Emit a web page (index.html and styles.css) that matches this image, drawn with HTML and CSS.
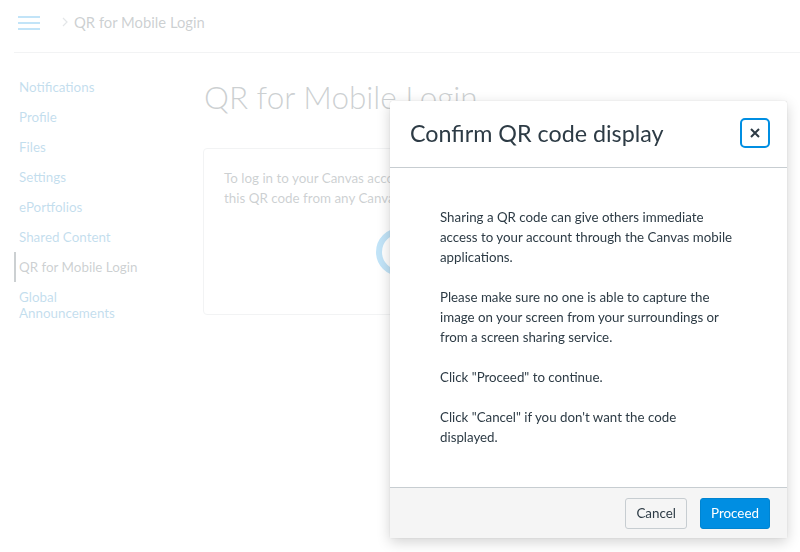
FILE: index.html
```html
<!DOCTYPE html>
<html lang="en">
<head>
<meta charset="utf-8">
<title>QR for Mobile Login</title>
<link rel="stylesheet" href="styles.css">
</head>
<body>
<div class="app">
  <header class="topbar">
    <svg class="hamburger" width="22" height="14" viewBox="0 0 22 14"><rect x="0" y="0" width="22" height="2"/><rect x="0" y="6" width="22" height="2"/><rect x="0" y="12" width="22" height="2"/></svg>
    <svg class="chev" width="6" height="10" viewBox="0 0 6 10"><path d="M1 1 L5 5 L1 9" fill="none" stroke="#8b969e" stroke-width="1.2"/></svg>
    <span class="crumb">QR for Mobile Login</span>
  </header>
  <div class="layout">
    <nav class="sidebar">
      <a class="nav-item">Notifications</a>
      <a class="nav-item">Profile</a>
      <a class="nav-item">Files</a>
      <a class="nav-item">Settings</a>
      <a class="nav-item">ePortfolios</a>
      <a class="nav-item">Shared Content</a>
      <a class="nav-item active">QR for Mobile Login</a>
      <a class="nav-item">Global Announcements</a>
    </nav>
    <main class="main">
      <h1 class="page-title">QR for Mobile Login</h1>
      <section class="qr-box">
        <p class="qr-text">To log in to your Canvas account on a mobile device, scan<br>this QR code from any Canvas mobile app.</p>
        <div class="spinner"></div>
      </section>
    </main>
  </div>
</div>
<div class="overlay"></div>
<div class="modal" role="dialog">
  <div class="modal-header">
    <h2 class="modal-title">Confirm QR code display</h2>
    <button class="close-btn" aria-label="Close"><svg width="10" height="10" viewBox="0 0 10 10"><path d="M1 1 L9 9 M9 1 L1 9" stroke="#2d3b45" stroke-width="2"/></svg></button>
  </div>
  <div class="modal-body">
    <p>Sharing a QR code can give others immediate access to your account through the Canvas mobile applications.</p>
    <p>Please make sure no one is able to capture the image on your screen from your surroundings or from a screen sharing service.</p>
    <p>Click "Proceed" to continue.</p>
    <p>Click "Cancel" if you don't want the code displayed.</p>
  </div>
  <div class="modal-footer">
    <button class="btn btn-default">Cancel</button>
    <button class="btn btn-primary">Proceed</button>
  </div>
</div>
</body>
</html>
```
FILE: styles.css
```css
* { box-sizing: border-box; }
html, body { margin: 0; padding: 0; }
body {
  font-family: Lato, "Open Sans", "Liberation Sans", sans-serif;
  color: #2d3b45;
  background: #fff;
  width: 800px;
  height: 552px;
  overflow: hidden;
  position: relative;
}
.topbar {
  display: flex;
  align-items: center;
  height: 53px;
  margin-left: 14px;
  padding: 0 0 9px 4px;
  border-bottom: 1px solid #c7cdd1;
}
.hamburger { fill: #008ee2; margin-top: 3px; }
.chev { margin-left: 22px; margin-top: 1px; }
.crumb { margin-left: 6px; font-size: 14.8px; color: #2d3b45; }
.layout {
  display: flex;
  margin-left: 14px;
  padding-top: 19px;
}
.sidebar {
  width: 130px;
  flex: none;
  display: flex;
  flex-direction: column;
}
.nav-item {
  display: block;
  font-size: 13.4px;
  line-height: 16px;
  padding: 7px 0 7px 3px;
  border-left: 2px solid transparent;
  color: #0374b5;
}
.nav-item.active {
  border-left-color: #2d3b45;
  color: #2d3b45;
}
.main {
  flex: 1;
  margin-left: 59px;
  padding-right: 20px;
}
.page-title {
  margin: 6px 0 0 1px;
  font-size: 31.5px;
  font-weight: 300;
  line-height: 39px;
}
.qr-box {
  margin-top: 31px;
  height: 167px;
  border: 1px solid #c7cdd1;
  border-radius: 4px;
  padding: 19px 20px;
}
.qr-text { margin: 0; font-size: 13.4px; line-height: 20px; }
.spinner {
  width: 48px;
  height: 48px;
  margin: 20px 0 0 152px;
  border-radius: 50%;
  border: 6px solid #008ee2;
}
.overlay {
  position: fixed;
  inset: 0;
  background: rgba(255,255,255,0.76);
}
.modal {
  position: absolute;
  left: 390px;
  top: 101px;
  width: 397px;
  background: #fff;
  border-radius: 2px;
  box-shadow: 0 0 1px rgba(0,0,0,.25), 0 4px 14px rgba(0,0,0,.18);
}
.modal-header {
  height: 67px;
  display: flex;
  align-items: center;
  justify-content: space-between;
  padding: 0 17px 2px 20px;
  border-bottom: 1px solid #c7cdd1;
}
.modal-title {
  margin: 0;
  font-size: 23.3px;
  font-weight: 400;
  color: #2d3b45;
}
.close-btn {
  width: 30px;
  height: 30px;
  padding: 0;
  display: flex;
  align-items: center;
  justify-content: center;
  background: #fff;
  border: 2px solid #008ee2;
  border-radius: 5px;
}
.modal-body {
  padding: 39px 50px 20px;
  font-size: 13.3px;
  line-height: 20px;
  color: #2d3b45;
}
.modal-body p { margin: 0 0 20px; }
.modal-footer {
  display: flex;
  justify-content: flex-end;
  align-items: center;
  gap: 13px;
  height: 51px;
  padding: 0 17px;
  background: #f5f5f5;
  border-top: 1px solid #c7cdd1;
}
.btn {
  height: 31px;
  padding: 0 10px;
  font-family: inherit;
  font-size: 13.4px;
  border-radius: 3px;
}
.btn-default {
  background: #f5f5f5;
  color: #2d3b45;
  border: 1px solid #c7cdd1;
}
.btn-primary {
  background: #008ee2;
  color: #fff;
  border: 1px solid #0084d1;
}
```
